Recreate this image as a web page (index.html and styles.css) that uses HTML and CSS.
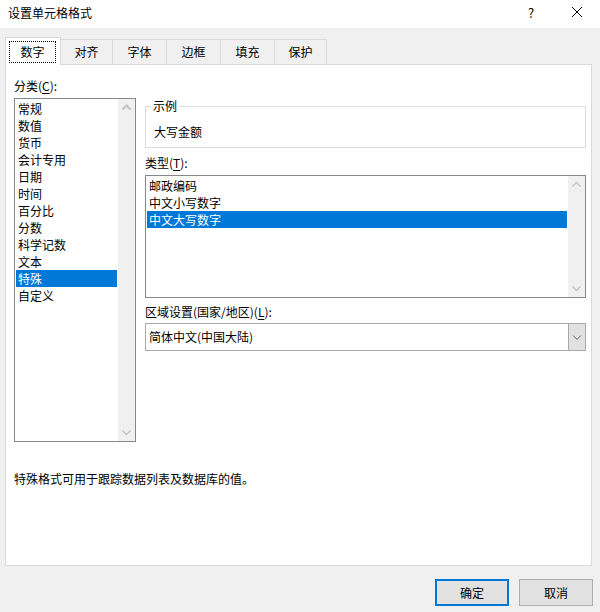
FILE: index.html
```html
<!DOCTYPE html>
<html lang="zh-CN">
<head>
<meta charset="utf-8">
<title>设置单元格格式</title>
<link rel="stylesheet" href="styles.css">
</head>
<body>
<div class="window">
  <div class="titlebar">
    <span class="title">设置单元格格式</span>
    <span class="help">?</span>
    <span class="close">
      <svg width="12" height="12" viewBox="0 0 12 12"><path d="M1 1L11 11M11 1L1 11" stroke="#000" stroke-width="1" fill="none"/></svg>
    </span>
  </div>

  <div class="tabs">
    <div class="tab active"><span class="focus">数字</span></div>
    <div class="tab w52">对齐</div>
    <div class="tab">字体</div>
    <div class="tab">边框</div>
    <div class="tab">填充</div>
    <div class="tab w52">保护</div>
  </div>

  <div class="panel">
    <div class="columns">
      <div class="left">
        <div class="label">分类(<u>C</u>):</div>
        <div class="listbox cat">
          <ul class="items">
            <li>常规</li>
            <li>数值</li>
            <li>货币</li>
            <li>会计专用</li>
            <li>日期</li>
            <li>时间</li>
            <li>百分比</li>
            <li>分数</li>
            <li>科学记数</li>
            <li>文本</li>
            <li class="sel">特殊</li>
            <li>自定义</li>
          </ul>
          <div class="scrollbar">
            <svg class="arrow" width="17" height="17" viewBox="0 0 17 17"><path d="M4.5 10.5L8.5 6.5L12.5 10.5" stroke="#c2c2c2" stroke-width="2" fill="none"/></svg>
            <svg class="arrow" width="17" height="17" viewBox="0 0 17 17"><path d="M4.5 6.5L8.5 10.5L12.5 6.5" stroke="#c2c2c2" stroke-width="1.3" fill="none"/></svg>
          </div>
        </div>
      </div>

      <div class="right">
        <fieldset class="sample">
          <legend>示例</legend>
          <div class="sample-value">大写金额</div>
        </fieldset>

        <div class="label type-label">类型(<u>T</u>):</div>
        <div class="listbox types">
          <ul class="items">
            <li>邮政编码</li>
            <li>中文小写数字</li>
            <li class="sel">中文大写数字</li>
          </ul>
          <div class="scrollbar">
            <svg class="arrow" width="17" height="17" viewBox="0 0 17 17"><path d="M4.5 10.5L8.5 6.5L12.5 10.5" stroke="#c2c2c2" stroke-width="1.3" fill="none"/></svg>
            <svg class="arrow" width="17" height="17" viewBox="0 0 17 17"><path d="M4.5 6.5L8.5 10.5L12.5 6.5" stroke="#c2c2c2" stroke-width="1.3" fill="none"/></svg>
          </div>
        </div>

        <div class="label locale-label">区域设置(国家/地区)(<u>L</u>):</div>
        <div class="combo">
          <span class="combo-text">简体中文(中国大陆)</span>
          <span class="drop">
            <svg width="17" height="26" viewBox="0 0 17 26"><path d="M4.5 11.5L8.5 15.5L12.5 11.5" stroke="#5a5a5a" stroke-width="1" fill="none"/></svg>
          </span>
        </div>
      </div>
    </div>

    <p class="desc">特殊格式可用于跟踪数据列表及数据库的值。</p>
  </div>

  <div class="buttons">
    <button class="btn default">确定</button>
    <button class="btn">取消</button>
  </div>
</div>
</body>
</html>
```
FILE: styles.css
```css
* { box-sizing: border-box; }
html, body { margin: 0; padding: 0; }
body {
  background: #f0f0f0;
  font-family: "Microsoft YaHei UI", "Noto Sans CJK SC", "Noto Sans", sans-serif;
  font-size: 12px;
  color: #000;
  width: 600px;
  height: 612px;
  overflow: hidden;
}
.window { width: 600px; height: 612px; display: flex; flex-direction: column; }

.titlebar {
  height: 28px;
  background: #fff;
  display: flex;
  align-items: center;
  padding-left: 8px;
}
.title { flex: 1; line-height: 16px; margin-top: -3px; }
.help { width: 46px; text-align: center; font-size: 13px; margin-top: -4px; margin-right: 0; }
.close { width: 46px; height: 28px; display: flex; align-items: center; justify-content: center; margin-top: -4px; }

.tabs {
  display: flex;
  align-items: flex-end;
  height: 28px;
  margin: 9px 0 -1px 5px;
  position: relative;
  z-index: 1;
}
.tab {
  width: 54px;
  height: 25px;
  margin-bottom: 1px;
  border-top: 1px solid #d9d9d9;
  border-right: 1px solid #d9d9d9;
  background: #f0f0f0;
  display: flex;
  align-items: center;
  justify-content: center;
  line-height: 16px;
}
.tab.w52 { width: 52px; }
.tab.active {
  width: 56px;
  height: 28px;
  margin-bottom: 0;
  border: 1px solid #d9d9d9;
  border-bottom: none;
  background: #fff;
  align-items: stretch;
  padding: 3px 4px 2px 3px;
}
.focus {
  flex: 1;
  border: 1px dotted #000;
  display: flex;
  align-items: center;
  justify-content: center;
}

.panel {
  margin: 0 8px 0 5px;
  height: 502px;
  background: #fff;
  border: 1px solid #d9d9d9;
  padding: 13px 5px 0 8px;
}
.columns { display: flex; gap: 9px; }
.left { width: 122px; }
.right { flex: 1; padding-top: 20px; }

.label { line-height: 16px; margin-bottom: 4px; white-space: nowrap; }
u { text-decoration-thickness: 1px; text-underline-offset: 2px; }

.listbox {
  border: 1px solid #828790;
  display: flex;
  background: #fff;
}
.listbox.cat { height: 344px; }
.listbox.types { height: 123px; }
.items {
  list-style: none;
  margin: 0;
  padding: 1px 1px 0 1px;
  flex: 1;
}
.items li {
  height: 17px;
  line-height: 17px;
  padding-left: 2px;
  white-space: nowrap;
}
.items li.sel { background: #0078d7; color: #fff; }
.scrollbar {
  width: 17px;
  background: #f0f0f0;
  display: flex;
  flex-direction: column;
  justify-content: space-between;
}
.arrow { display: block; }

.sample {
  margin: 0;
  padding: 0 8px 7px 8px;
  border: 1px solid #dcdcdc;
  min-width: 0;
}
.sample legend {
  padding: 0 2px;
  margin-left: -3px;
  line-height: 16px;
}
.sample-value { line-height: 16px; margin-top: 10px; }

.type-label { margin-top: 7px; }
.locale-label { margin-top: 6px; margin-bottom: 3px; }

.combo {
  height: 28px;
  border: 1px solid #a9a9a9;
  display: flex;
  align-items: stretch;
  background: #fff;
}
.combo-text { flex: 1; padding-left: 3px; line-height: 26px; }
.drop {
  width: 17px;
  background: #e1e1e1;
  border-left: 1px solid #a9a9a9;
  display: flex;
  align-items: center;
  justify-content: center;
}

.desc { margin: 29px 0 0 0; line-height: 16px; }

.buttons {
  display: flex;
  justify-content: flex-end;
  gap: 10px;
  margin-top: 13px;
  padding-right: 7px;
}
.btn {
  width: 74px;
  height: 27px;
  font: inherit;
  color: #000;
  background: #e1e1e1;
  border: 1px solid #adadad;
  padding: 0;
  line-height: 16px;
}
.btn.default { border: 2px solid #0078d7; }
```
